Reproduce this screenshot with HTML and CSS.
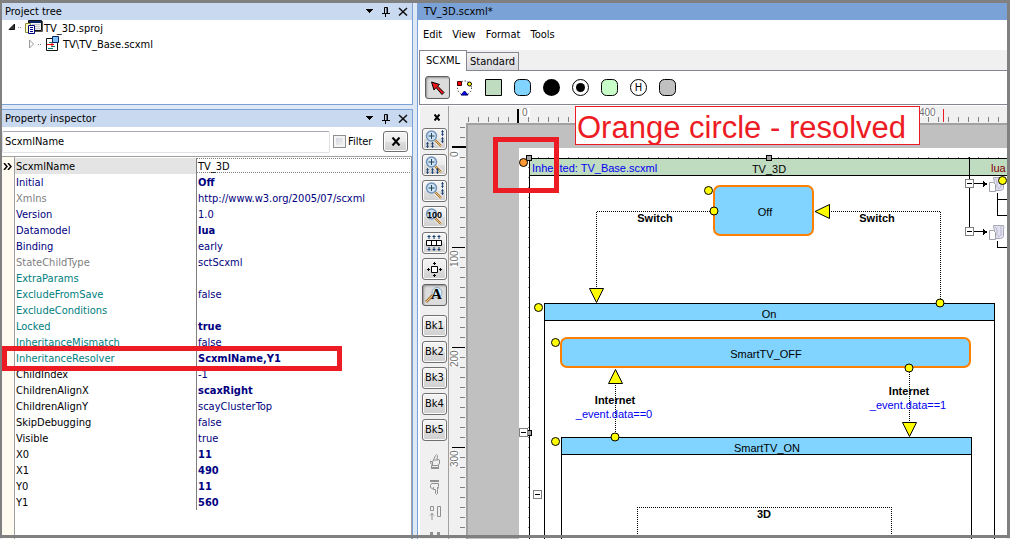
FILE: index.html
```
<!DOCTYPE html>
<html lang="en">
<head>
<meta charset="utf-8">
<title>TV_3D.scxml</title>
<link rel="stylesheet" href="styles.css">
</head>
<body>
<svg class="defs" aria-hidden="true">
  <defs>
    <symbol id="caret" viewBox="0 0 9 5"><path d="M1 0h7v1h-1v1h-1v1h-1v1h-1v-1h-1v-1h-1v-1h-1z"/></symbol>
    <symbol id="pin" viewBox="0 0 8 10"><path d="M2.500 6.500v-6h3v6M5 1v5M0 6.500h8M3.500 7v3" fill="none" stroke="#000"/></symbol>
    <symbol id="close" viewBox="0 0 10 9"><path d="M1 1l8 7.500M9 1L1 8.500" fill="none" stroke="#111" stroke-width="1.500"/></symbol>
    <symbol id="lens" viewBox="0 0 18 18">
      <path d="M10 10l6 6" stroke="#fff" stroke-width="4"/><path d="M10 10l6 6" stroke="#a67c45" stroke-width="2.500"/><path d="M10 10l6 6" stroke="#f1c77e"/>
      <circle cx="6.500" cy="6" r="5" fill="#cfe3f7" stroke="#7194b8" stroke-width="1.500"/>
    </symbol>
    <symbol id="updown" viewBox="0 0 5 7"><path d="M2.500 0v7M1 2h3M1 5h3" fill="none" stroke="#123c6d"/></symbol>
    <symbol id="minus" viewBox="0 0 9 9"><path d="M.5.5h8v8h-8z" fill="#fff" stroke="#808080"/><path d="M2 4.500h5" stroke="#000"/></symbol>
    <symbol id="script" viewBox="0 0 16 16">
      <path d="M4.500 1.500h10q1 2 0 4v7q-1 2-3 2h-5z" fill="#e0e0f0" stroke="#a8a8b8"/><path d="M6 3q2 1 2 3v6M12 2v9l-3 2" fill="none" stroke="#b8b8c8"/>
      <path d="M.5 6.500h4l2 2v7h-6z" fill="#fff" stroke="#a0a0a8"/>
    </symbol>
    <pattern id="ticks-x" x="468" y="0" width="10" height="10" patternUnits="userSpaceOnUse"><path d="M0 0h1v10h-1z" fill="#808080"/></pattern>
    <pattern id="ticks-y" x="0" y="127" width="10" height="10" patternUnits="userSpaceOnUse"><path d="M0 0v1h10v-1z" fill="#808080"/></pattern>
  </defs>
</svg>
<div class="app">
  <aside class="side">
    <section class="panel tree-panel">
      <header class="bar"><h2>Project tree</h2>
        <button class="bar-btn" aria-label="Menu"><svg width="9" height="5"><use href="#caret"/></svg></button>
        <button class="bar-btn" aria-label="Pin"><svg width="8" height="10"><use href="#pin"/></svg></button>
        <button class="bar-btn" aria-label="Close"><svg width="10" height="9"><use href="#close"/></svg></button>
      </header>
      <ul class="tree">
        <li><svg width="36" height="16" viewBox="0 0 36 16">
            <path d="M1 9.500h5.500v-5.500z" fill="#333" stroke="#111"/><path d="M10 7.500h1M12 7.500h1" stroke="#888"/>
            <path d="M20.500 .5h13v10h-13z" fill="#f0f0f0" stroke="#111"/><path d="M21 1h12v2h-12z" fill="#0a246a"/><path d="M25 4v6M27 4v6M29 4v6M31 4v6" stroke="#999" stroke-dasharray="1 1"/><path d="M34.500 1v10.500h-8" fill="none" stroke="#555"/>
            <path d="M17.500 3.500h5v9h-5z" fill="#ffffc0" stroke="#8b8b3a"/><path d="M20.500 5.500h6v8h-6z" fill="#fff" stroke="#000080"/><path d="M22 7.500h3M22 9.500h3M22 11.500h3" stroke="#000080"/>
          </svg><span>TV_3D.sproj</span>
          <ul>
            <li><svg width="35" height="16" viewBox="0 0 35 16">
              <path d="M1.500 4v8l4-4z" fill="#fff" stroke="#999"/><path d="M10 8.500h1M12 8.500h1" stroke="#888"/>
              <path d="M18.500 2.500h11v12h-11z" fill="#fff" stroke="#111"/><path d="M21 6.500h4M23 10.500h4M20 12.500h5" stroke="#008080"/><path d="M19 8.500h7" stroke="#e00000"/><path d="M24 6.500v4" stroke="#e00000"/><path d="M24.500 .5h6v6h-6z" fill="#7fc4ff" stroke="#0a246a"/>
            </svg><span>TV\TV_Base.scxml</span></li>
          </ul>
        </li>
      </ul>
    </section>
    <section class="panel props-panel">
      <header class="bar"><h2>Property inspector</h2>
        <button class="bar-btn" aria-label="Menu"><svg width="9" height="5"><use href="#caret"/></svg></button>
        <button class="bar-btn" aria-label="Pin"><svg width="8" height="10"><use href="#pin"/></svg></button>
        <button class="bar-btn" aria-label="Close"><svg width="10" height="9"><use href="#close"/></svg></button>
      </header>
      <form class="filter">
        <input class="filter-text" type="text" value="ScxmlName" aria-label="Property name">
        <label class="filter-check"><input type="checkbox">Filter</label>
        <button class="btn clear" type="button" aria-label="Clear"><svg width="10" height="9" viewBox="0 0 10 9"><path d="M1.500 .5l7 8M8.500 .5l-7 8" stroke="#000" stroke-width="2"/></svg></button>
      </form>
      <div class="grid">
        <table class="props">
          <tbody>
            <tr class="selected"><td class="mark"><svg width="9" height="7" viewBox="0 0 9 7"><path d="M1 0l3 3.500L1 7M5 0l3 3.500L5 7" fill="none" stroke="#000" stroke-width="1.500"/></svg></td><th>ScxmlName</th><td>TV_3D</td></tr>
            <tr class="navy"><td></td><th>Initial</th><td class="set">Off</td></tr>
            <tr class="gray"><td></td><th>Xmlns</th><td>http://www.w3.org/2005/07/scxml</td></tr>
            <tr class="navy"><td></td><th>Version</th><td>1.0</td></tr>
            <tr class="navy"><td></td><th>Datamodel</th><td class="set">lua</td></tr>
            <tr class="navy"><td></td><th>Binding</th><td>early</td></tr>
            <tr class="gray"><td></td><th>StateChildType</th><td>sctScxml</td></tr>
            <tr class="teal"><td></td><th>ExtraParams</th><td></td></tr>
            <tr class="teal"><td></td><th>ExcludeFromSave</th><td>false</td></tr>
            <tr class="teal"><td></td><th>ExcludeConditions</th><td></td></tr>
            <tr class="teal"><td></td><th>Locked</th><td class="set">true</td></tr>
            <tr class="teal"><td></td><th>InheritanceMismatch</th><td>false</td></tr>
            <tr class="teal marked"><td></td><th>InheritanceResolver</th><td class="set">ScxmlName,Y1</td></tr>
            <tr><td></td><th>ChildIndex</th><td>-1</td></tr>
            <tr><td></td><th>ChildrenAlignX</th><td class="set">scaxRight</td></tr>
            <tr><td></td><th>ChildrenAlignY</th><td>scayClusterTop</td></tr>
            <tr><td></td><th>SkipDebugging</th><td>false</td></tr>
            <tr><td></td><th>Visible</th><td>true</td></tr>
            <tr><td></td><th>X0</th><td class="set">11</td></tr>
            <tr><td></td><th>X1</th><td class="set">490</td></tr>
            <tr><td></td><th>Y0</th><td class="set">11</td></tr>
            <tr><td></td><th>Y1</th><td class="set">560</td></tr>
          </tbody>
        </table>
      </div>
    </section>
  </aside>
  <main class="editor">
    <header class="bar doc-bar"><h1>TV_3D.scxml*</h1></header>
    <nav class="menu"><button>Edit</button><button>View</button><button>Format</button><button>Tools</button></nav>
    <div class="tabs"><button class="tab active">SCXML</button><button class="tab">Standard</button></div>
    <div class="shapes">
      <button class="shape pressed" aria-label="Select"><svg width="14" height="14" viewBox="0 0 14 14"><path d="M.5 1l8 2.500-2 1.500 6.500 6.500-2 2L5 6.500 3 9z" fill="#f01818" stroke="#000"/></svg></button>
      <button class="shape" aria-label="Transition"><svg width="17" height="17" viewBox="0 0 17 17"><circle cx="8.500" cy="9" r="7" fill="none" stroke="#000" stroke-dasharray="1 2"/><path d="M1.500 2.500h4v4h-4z" fill="#f00" stroke="#400"/><circle cx="13.500" cy="5" r="2" fill="#ff0" stroke="#000"/><path d="M5 16l3.500-4 3.500 4z" fill="#00f" stroke="#006"/></svg></button>
      <button class="shape" aria-label="Root"><svg width="17" height="17"><path d="M.5.5h16v16H.5z" fill="#c0dcc0" stroke="#000"/></svg></button>
      <button class="shape" aria-label="State"><svg width="17" height="17"><rect x=".5" y=".5" width="16" height="16" rx="5" fill="#80d4ff" stroke="#000"/></svg></button>
      <button class="shape" aria-label="Initial"><svg width="17" height="17"><circle cx="8.500" cy="8.500" r="8.500"/></svg></button>
      <button class="shape" aria-label="Final"><svg width="17" height="17"><circle cx="8.500" cy="8.500" r="8" fill="#fff" stroke="#000"/><circle cx="8.500" cy="8.500" r="4.500"/></svg></button>
      <button class="shape" aria-label="Parallel"><svg width="17" height="17"><rect x=".5" y=".5" width="16" height="16" rx="5" fill="#c8ffc8" stroke="#000"/></svg></button>
      <button class="shape history">H</button>
      <button class="shape" aria-label="Group"><svg width="17" height="17"><rect x=".5" y=".5" width="16" height="16" rx="5" fill="#c0c0c0" stroke="#000"/></svg></button>
    </div>
    <div class="work">
      <div class="tools">
        <button class="tools-close" aria-label="Close toolbar"><svg width="6" height="7" viewBox="0 0 6 7"><path d="M.5 .5l5 6M5.500 .5l-5 6" stroke="#000" stroke-width="2"/></svg></button>
        <div class="tool-group">
          <button class="btn tool" aria-label="Zoom both"><svg width="20" height="18"><use href="#lens" width="18" height="18"/><path d="M6.500 3v6M3.500 6h6" stroke="#245"/><use href="#updown" x="15" y="0" width="5" height="6"/><use href="#updown" x="15" y="7" width="5" height="6"/><use href="#updown" x="0" y="12" width="5" height="6"/><use href="#updown" x="5" y="12" width="5" height="6"/></svg></button>
          <button class="btn tool" aria-label="Zoom width"><svg width="20" height="18"><use href="#lens" width="18" height="18"/><path d="M6.500 3v6M3.500 6h6" stroke="#245"/><use href="#updown" x="0" y="12" width="5" height="6"/><use href="#updown" x="5" y="12" width="5" height="6"/><use href="#updown" x="10" y="12" width="5" height="6"/></svg></button>
          <button class="btn tool" aria-label="Zoom height"><svg width="20" height="18"><use href="#lens" width="18" height="18"/><path d="M6.500 3v6M3.500 6h6" stroke="#245"/><use href="#updown" x="15" y="0" width="5" height="6"/><use href="#updown" x="15" y="7" width="5" height="6"/></svg></button>
          <button class="btn tool" aria-label="Zoom 100"><svg width="20" height="18"><use href="#lens" width="18" height="18"/><text x="2" y="10" class="hundred">100</text></svg></button>
          <button class="btn tool" aria-label="Spread"><svg width="17" height="18" viewBox="0 0 17 18"><path d="M.5 6.500h15v5H.5zM5.500 6.500v5M10.500 6.500v5" fill="#fff" stroke="#000"/><path d="M3 1v4M8 1v4M13 1v4M1.500 2.500h3M6.500 2.500h3M11.500 2.500h3M3 13v4M8 13v4M13 13v4M1.500 15.500h3M6.500 15.500h3M11.500 15.500h3" stroke="#123c6d"/></svg></button>
          <button class="btn tool" aria-label="Center"><svg width="17" height="17" viewBox="0 0 17 17"><path d="M5.500 5.500h6v6h-6z" fill="#fff" stroke="#000"/><path d="M8.500 1v3M8.500 13v3M1 8.500h3M13 8.500h3M7 2.500h3M7 14.500h3M2.500 7v3M14.500 7v3" stroke="#000"/></svg></button>
          <button class="btn tool pressed" aria-label="Find text"><svg width="20" height="18" viewBox="0 0 20 18"><path d="M1 16l7-7" stroke="#a67c45" stroke-width="3"/><path d="M1 16l7-7" stroke="#f1c77e"/><circle cx="12" cy="6.500" r="5" fill="#d6efff" stroke="#9ab"/><text x="6" y="13" class="letter">A</text></svg></button>
        </div>
        <div class="tool-group">
          <button class="btn tool">Bk1</button><button class="btn tool">Bk2</button><button class="btn tool">Bk3</button><button class="btn tool">Bk4</button><button class="btn tool">Bk5</button>
        </div>
        <div class="tool-group plain">
          <button class="tool" aria-label="Bring forward"><svg width="12" height="17" viewBox="0 0 12 17"><path d="M3.500 12V9l-2-1v2l2 2M3.500 9l3-6.500q1-2 2 0L8 6l2.500 1v3l-1 2M6 8V6M8 8V6M2.500 12.500h7v3h-7z" fill="none" stroke="#909090"/><path d="M2 14h8v2H2z" fill="#909090"/></svg></button>
          <button class="tool" aria-label="Send back"><svg width="12" height="17" viewBox="0 0 12 17"><path d="M1 1h9v2H1z" fill="#909090"/><path d="M2.500 4.500h7v3l-1 3v4q-1 2-2 0v-4h-2l-3-2v-2zM4.500 10V8M8.500 10V8" fill="none" stroke="#909090"/></svg></button>
          <button class="tool" aria-label="Align"><svg width="12" height="16" viewBox="0 0 12 16"><path d="M1.500 1.500h3v4h-3zM8.500 1.500h3v10h-3zM3 15V8M1 10.500l2-2 2 2" fill="none" stroke="#909090"/></svg></button>
          <button class="tool" aria-label="Align down"><svg width="12" height="16" viewBox="0 0 12 16"><path d="M1 1h3v5H1zM8 1h3v5H8z" fill="#909090"/></svg></button>
        </div>
      </div>
      <div class="canvas">
        <svg class="diagram" width="100%" height="100%"><g transform="translate(-449 -106)" shape-rendering="crispEdges">
          <path d="M466 123h2000v2000h-2000z" fill="#a0a0a0"/><path d="M468 125h2000v2000h-2000z" fill="#c0c0c0"/><path d="M519 148h2000v2000h-2000z" fill="#fff"/>
          <path d="M468 117h2000v5h-2000z" fill="url(#ticks-x)"/><path d="M460 127h5v2000h-5z" fill="url(#ticks-y)"/>
          <path d="M521 108h9v9h-9zM920 108h16v9h-16zM451 150h8v9h-8zM451 250h8v17h-8zM451 350h8v17h-8zM451 450h8v17h-8z" fill="#fff"/>
          <path d="M517 109h2v14h-2zM452 146h14v2h-14zM452 247h13v1h-13zM452 347h13v1h-13zM452 447h13v1h-13z"/><path d="M943 109h1v13h-1z" fill="#ed1c24"/>
          <g class="ruler"><text x="522" y="116">0</text><text x="919" y="116">400</text>
            <text transform="translate(458 157) rotate(-90)">0</text><text transform="translate(458 267) rotate(-90)">100</text><text transform="translate(458 367) rotate(-90)">200</text><text transform="translate(458 467) rotate(-90)">300</text></g>
          <path d="M528 157h2000v1h-2000z" fill="url(#ticks-x)"/><path d="M528 158h1v2000h-1z" fill="url(#ticks-y)"/>
          <path d="M529.500 158.500h2000v17h-2000z" fill="#c0dcc0" stroke="#000"/><path d="M529.500 158v2000" stroke="#000"/>
          <g fill="#a0a0a0" stroke="#000"><path d="M526.500 155.500h5v5h-5zM766.500 155.500h5v5h-5zM526.500 430.500h5v5h-5z"/></g>
          <path d="M969.500 157v74M973 183.500h12M973 231.500h12M1010 199.500h-12.500M997.500 193v22.500h20M997.500 241v6.500h20" fill="none" stroke="#000"/><path d="M983 181v6l5-3zM983 229v6l5-3z"/>
          <use href="#minus" x="965" y="179" width="9" height="9"/><use href="#minus" x="965" y="227" width="9" height="9"/><use href="#minus" x="519" y="428" width="9" height="9"/>
          <g shape-rendering="auto"><use href="#script" x="989" y="176" width="16" height="16"/><use href="#script" x="989" y="224" width="16" height="16"/></g>
          <path d="M544.500 1500V303.500h450V1500M561.500 1500V437.500h410V1500" fill="none" stroke="#000"/>
          <use href="#minus" x="533" y="490" width="9" height="9"/>
          <path d="M544.500 303.500h450v17h-450zM561.500 437.500h410v17h-410z" fill="#80d4ff" stroke="#000"/>
          <g fill="#80d4ff" stroke="#ff8000" stroke-width="2" shape-rendering="auto"><rect x="714" y="186" width="99" height="49" rx="6"/><rect x="561" y="338" width="409" height="29" rx="6"/></g>
          <path d="M710 211.500H596.500V290M829 211.500H940.500V300M615.500 383V436M909.500 370V422M637.500 1500V507.500h254V1500" fill="none" stroke="#000" stroke-dasharray="1 1"/>
          <g fill="#ff0" stroke="#000" shape-rendering="auto">
            <path d="M589.500 288.500h14l-7 14zM829.500 204.500v14l-14.500-7zM608.500 383.500h14l-7-14zM902.500 422.500h14l-7 14z"/>
            <circle cx="708.500" cy="190.500" r="4"/><circle cx="714" cy="211" r="4"/><circle cx="538.500" cy="307.500" r="4"/><circle cx="940" cy="303" r="4"/><circle cx="555.500" cy="342.500" r="4"/><circle cx="909" cy="368" r="4"/><circle cx="615" cy="437" r="4"/><circle cx="555.500" cy="441.500" r="4"/><circle cx="1002.500" cy="180.500" r="4"/><circle cx="523.500" cy="162.500" r="4" fill="#ff9933"/>
          </g>
          <g class="labels"><text x="532" y="172" class="blue">Inherited: TV_Base.scxml</text><text x="991" y="172" class="maroon">lua</text>
            <g class="mid"><text x="769" y="173">TV_3D</text><text x="765" y="216">Off</text><text x="769" y="318">On</text><text x="766" y="358">SmartTV_OFF</text><text x="767" y="452">SmartTV_ON</text>
            <text x="614" y="418" class="blue">_event.data==0</text><text x="908" y="409" class="blue">_event.data==1</text></g>
            <g class="mid strong"><text x="655" y="222">Switch</text><text x="877" y="222">Switch</text><text x="615" y="404">Internet</text><text x="909" y="395">Internet</text><text x="764" y="518">3D</text></g>
          </g>
        </g></svg>
        <div class="callout">Orange circle - resolved</div>
        <div class="highlight"></div>
      </div>
    </div>
  </main>
</div>
</body>
</html>
```
FILE: styles.css
```
*, *::before, *::after { box-sizing: border-box; }
body { margin: 0; font: 11px/16px "DejaVu Sans Condensed", "Noto Sans", sans-serif; color: #000; background: #fff; }
button, input { font: inherit; color: inherit; margin: 0; padding: 0; }
button { border: 0; background: none; display: flex; align-items: center; justify-content: center; }
h1, h2 { margin: 0; font-size: 11px; font-weight: normal; }
ul { list-style: none; margin: 0; padding: 0; }
svg { display: block; flex: none; }
.defs { position: absolute; width: 0; height: 0; }

.app { position: relative; display: grid; grid-template-columns: 411px minmax(0, 1fr); column-gap: 4px; height: 100vh; padding: 3px 3px 0 2px; overflow: hidden; background: #dfe9f5; }
.app::after { content: ""; position: absolute; inset: 0 0 1px 0; border: 3px solid #808080; border-left-width: 2px; pointer-events: none; }

.side { display: flex; flex-direction: column; gap: 4px; min-height: 0; }
.panel { border-right: 1px solid #7ba2d6; background: #fff; }
.tree-panel { height: 102px; flex: none; border-bottom: 1px solid #7ba2d6; }
.props-panel { display: flex; flex-direction: column; flex: 1; min-height: 0; border-top: 1px solid #7ba2d6; }
.bar { display: flex; align-items: center; gap: 7px; height: 17px; flex: none; padding: 0 4px 0 3px; background: #c9d9ef; }
.bar h1, .bar h2 { flex: 1; padding-top: 1px; }
.bar-btn { width: 10px; height: 12px; }
.tree { padding-left: 6px; }
.tree li { display: grid; grid-template-columns: auto 1fr; align-items: center; }
.tree ul { grid-column: 1 / -1; padding-left: 20px; }
.tree span { line-height: 15px; padding-top: 1px; }

.filter { display: flex; align-items: center; height: 29px; flex: none; padding: 0 4px 0 0; }
.filter-text { flex: 1; min-width: 0; height: 22px; padding: 0 2px; border: 1px solid #e0e0e6; border-top-color: #a8a8b0; border-radius: 2px; }
.filter-check { display: flex; align-items: center; gap: 2px; width: 50px; margin-left: 3px; }
.filter-check input { appearance: none; width: 13px; height: 13px; border: 1px solid #8e8f8f; background: linear-gradient(135deg, #ccd2d8, #f6f6f6); box-shadow: inset 0 0 0 2px #f4f4f4; }
.btn { border: 1px solid #707070; border-radius: 3px; background: linear-gradient(#f4f4f4, #ebebeb 50%, #dddddd 50%, #cfcfcf); box-shadow: inset 0 0 0 1px #fcfcfc; }
.clear { width: 25px; height: 21px; }

.grid { flex: 1; border-top: 1px solid #a0a0a0; border-right: 1px solid #a0a0a0; background: linear-gradient(90deg, #fffbf0 12px, #a0a0a0 12px, #a0a0a0 13px, #fff 13px); padding-top: 1px; }
.props { width: 100%; table-layout: fixed; border-collapse: separate; border-spacing: 0; color: #000; }
.props th, .props td { height: 16px; padding: 1px 0 0; font-weight: normal; text-align: left; line-height: 15px; white-space: nowrap; }
.props td:first-child { width: 12px; }
.props th { width: 183px; padding-left: 1px; border-left: 1px solid #a0a0a0; border-right: 1px solid #808080; }
.props td:last-child { padding-left: 1px; color: #000080; }
.props td.set { font-weight: bold; }
.props .mark { padding-left: 1px; }
.props .selected th { background: #e4e4e4; }
.props .selected td:last-child { color: #000; background: repeating-linear-gradient(90deg, #808080 0 1px, #fff 1px 2px) 0 0 / 100% 1px no-repeat, repeating-linear-gradient(90deg, #808080 0 1px, #fff 1px 2px) 0 14px / 100% 1px no-repeat; }
.props .navy th { color: #000080; }
.props .gray th { color: #808080; }
.props .teal th { color: #008080; }
.marked { position: relative; }
.marked td:first-child::after { content: ""; position: absolute; left: 0; top: -4px; width: 340px; height: 25px; border: 5px solid #ed1c24; }

.editor { display: flex; flex-direction: column; min-width: 0; min-height: 0; border-left: 1px solid #7ba2d6; background: #fff; }
.doc-bar { background: #7ba2d6; padding-left: 6px; }
.menu { display: flex; gap: 10px; height: 30px; flex: none; padding: 0 5px; }
.tabs { display: flex; align-items: flex-end; height: 21px; flex: none; margin-left: 1px; border-bottom: 1px solid #868690; background: #f0f0f0; }
.tab { height: 18px; padding: 1px 3px 0; border: 1px solid #868690; border-bottom: 0; border-left: 0; background: linear-gradient(#f2f2f2, #d8d8de); }
.tab.active { height: 21px; margin-bottom: -1px; padding: 0 6px; border-left: 1px solid #868690; background: #fff; }
.shapes { display: flex; align-items: center; gap: 4px; height: 34px; flex: none; margin-left: 1px; padding-left: 5px; border-left: 1px solid #868690; border-bottom: 1px solid #868690; }
.shape { width: 25px; height: 23px; }
.shape.pressed { margin-right: -2px; }
.pressed { border: 1px solid #606060; border-radius: 3px; background: #dcdcdc; box-shadow: inset 1px 1px 2px #909090; }
.history { position: relative; }
.history::before { content: ""; position: absolute; width: 17px; height: 17px; border: 1px solid #000; border-radius: 50%; }

.work { display: flex; flex: 1; min-height: 0; margin: 1px 0 0 2px; background: #f0f0f0; }
.tools { width: 29px; flex: none; padding: 6px 0 0 2px; border-right: 1px solid #a0a0a0; overflow: hidden; }
.tools-close { width: 30px; height: 10px; }
.tool-group { display: flex; flex-direction: column; gap: 4px; padding-top: 6px; }
.tool-group + .tool-group { padding-top: 9px; }
.tool { width: 25px; height: 22px; flex: none; }
.hundred { font: bold 9px "Liberation Sans", sans-serif; }
.letter { font: bold 15px "Liberation Serif", serif; }
.canvas { position: relative; flex: 1; min-width: 0; overflow: hidden; }
.diagram { position: absolute; inset: 0; }
.ruler { font: 10px "Liberation Sans", sans-serif; fill: #707070; }
.labels { font: 11px "Liberation Sans", sans-serif; fill: #000; }
.mid { text-anchor: middle; }
.strong { font-weight: bold; }
.blue { fill: #0000f0; }
.maroon { fill: #800000; }
.callout { position: absolute; left: 126px; top: 0; height: 39px; padding: 0 13px 0 1px; border: 1px solid #ed1c24; background: #fff; color: #ed1c24; font: 31px/41px "Liberation Sans", sans-serif; white-space: nowrap; }
.highlight { position: absolute; left: 44px; top: 31px; width: 66px; height: 56px; border: 5px solid #ed1c24; }
```
